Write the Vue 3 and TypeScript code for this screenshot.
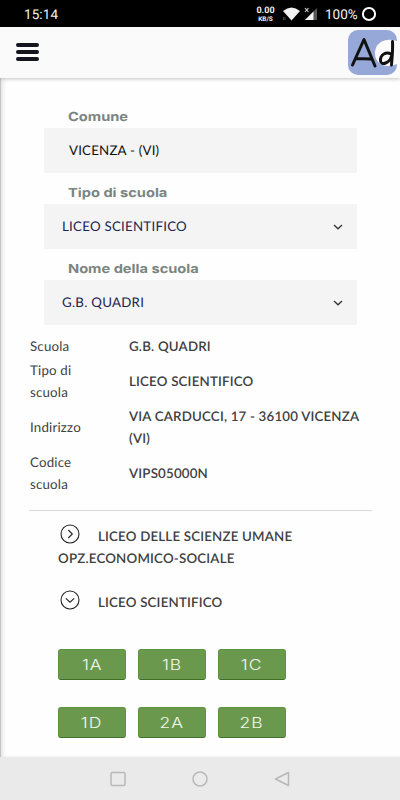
<script setup lang="ts">
interface Field {
  label: string
  value: string
  select: boolean
}

interface Detail {
  name: string
  value: string
}

const fields: Field[] = [
  { label: 'Comune', value: 'VICENZA - (VI)', select: false },
  { label: 'Tipo di scuola', value: 'LICEO SCIENTIFICO', select: true },
  { label: 'Nome della scuola', value: 'G.B. QUADRI', select: true },
]

const details: Detail[] = [
  { name: 'Scuola', value: 'G.B. QUADRI' },
  { name: 'Tipo di scuola', value: 'LICEO SCIENTIFICO' },
  { name: 'Indirizzo', value: 'VIA CARDUCCI, 17 - 36100 VICENZA (VI)' },
  { name: 'Codice scuola', value: 'VIPS05000N' },
]

const classes: string[] = ['1A', '1B', '1C', '1D', '2A', '2B']
</script>

<template>
  <div class="screen">
    <div class="status">
      <span class="clock">15:14</span>
      <div class="indicators">
        <div class="speed"><b>0.00</b><small>KB/S</small></div>
        <svg class="wifi" width="19" height="14" viewBox="0 0 19 14">
          <path d="M1 4Q9.500 -3 18 4L9.500 13.500Z" fill="#f2f2f2" />
          <path d="M1.500 10v3M3 10v3" stroke="#555" stroke-width=".8" />
        </svg>
        <svg class="signal" width="14" height="14" viewBox="0 0 14 14">
          <path d="M13 1V13H1Z" fill="#555" />
          <path d="M9.500 4.500V13H1Z" fill="#f2f2f2" />
          <path d="M1 1l3.500 4M4.500 1L1 5" stroke="#ddd" stroke-width="1.100" />
        </svg>
        <span class="percent">100%</span>
        <svg class="battery" width="16" height="16" viewBox="0 0 16 16">
          <circle cx="8" cy="8" r="6.100" fill="none" stroke="#fff" stroke-width="2" />
        </svg>
      </div>
    </div>

    <header class="bar">
      <button class="menu" aria-label="Menu"><i></i><i></i><i></i></button>
      <svg class="logo" width="49" height="45" viewBox="0 0 49 45">
        <rect width="49" height="45" rx="10" fill="#96a8d8" />
        <path d="M49 11C37 7 27 13 27 23C27 34 37 39 49 34Z" fill="#fcfcfc" />
        <g fill="none" stroke="#111" stroke-width="3" stroke-linecap="round" stroke-linejoin="round">
          <path d="M4.500 35L16 9.500L27 36M8 28.500L23 29" />
          <path d="M44.500 11.500C45 20 44 28 43.500 35M43 24C38 21 32 25 32.500 31C33 36 42 33 43.500 26" />
        </g>
      </svg>
    </header>

    <main class="content">
      <form class="form">
        <div v-for="field in fields" :key="field.label" class="field">
          <div class="label"><span>{{ field.label }}</span></div>
          <div class="box" :class="{ select: field.select }">
            <span>{{ field.value }}</span>
            <svg v-if="field.select" width="10" height="6" viewBox="0 0 10 6">
              <path d="M1 1L5 4.800L9 1" fill="none" stroke="#333" stroke-width="1.300" />
            </svg>
          </div>
        </div>
      </form>

      <dl class="details">
        <div v-for="item in details" :key="item.name" class="row">
          <dt>{{ item.name }}</dt>
          <dd>{{ item.value }}</dd>
        </div>
      </dl>

      <section class="courses">
        <div class="course">
          <svg width="20" height="20" viewBox="0 0 20 20">
            <circle cx="10" cy="10" r="9" />
            <path d="M8.300 6L12.300 10L8.300 14" />
          </svg>
          <span>LICEO DELLE SCIENZE UMANE OPZ.ECONOMICO-SOCIALE</span>
        </div>
        <div class="course">
          <svg width="20" height="20" viewBox="0 0 20 20">
            <circle cx="10" cy="10" r="9" />
            <path d="M5.800 8.300L10 12.200L14.200 8.300" />
          </svg>
          <span>LICEO SCIENTIFICO</span>
        </div>
        <div class="classes">
          <button v-for="name in classes" :key="name"><span>{{ name }}</span></button>
        </div>
      </section>
    </main>

    <nav class="nav">
      <svg width="16" height="16" viewBox="0 0 16 16"><rect x="1" y="1.500" width="14" height="13" rx="1.500" /></svg>
      <svg width="16" height="16" viewBox="0 0 16 16"><circle cx="8" cy="8" r="7" /></svg>
      <svg width="16" height="16" viewBox="0 0 16 16"><path d="M14.500 1.500V14.500L1.500 8Z" /></svg>
    </nav>
  </div>
</template>

<style>
body {
  margin: 0;
}
</style>

<style scoped>
.screen {
  width: 400px;
  height: 800px;
  display: flex;
  flex-direction: column;
  overflow: hidden;
  background: #fefefe;
  color: #404040;
  font-family: Lato, sans-serif;
  font-size: 13.3px;
  letter-spacing: 0.19px;
  text-rendering: geometricPrecision;
}
.status {
  flex: none;
  box-sizing: border-box;
  height: 27px;
  padding: 1px 23px 0 24px;
  display: flex;
  justify-content: space-between;
  align-items: center;
  background: #000;
  color: #f2f2f2;
  font-family: Roboto, sans-serif;
  letter-spacing: 0;
}
.clock {
  font-size: 13.5px;
  letter-spacing: 0.1px;
  padding-top: 1px;
}
.indicators {
  display: flex;
  align-items: center;
}
.speed {
  width: 19px;
  display: flex;
  flex-direction: column;
  align-items: center;
  margin-right: 7px;
}
.speed b {
  font-size: 9px;
  line-height: 10px;
}
.speed small {
  font-size: 6.5px;
  line-height: 7px;
  font-weight: 700;
}
.wifi {
  margin-right: 3px;
}
.signal {
  margin-right: 7px;
}
.percent {
  width: 34px;
  font-size: 13.5px;
  padding-top: 1px;
}
.battery {
  margin-left: 2px;
}
.bar {
  flex: none;
  box-sizing: border-box;
  height: 51px;
  padding: 0 3px 0 16px;
  display: flex;
  align-items: center;
  justify-content: space-between;
  background: #fafafa;
  box-shadow: 0 1px 4px rgba(0, 0, 0, 0.2);
  z-index: 1;
}
.menu {
  padding: 0;
  border: 0;
  background: none;
  display: flex;
  flex-direction: column;
  gap: 3px;
  margin-top: -1px;
}
.menu i {
  width: 23px;
  height: 4px;
  border-radius: 2px;
  background: #15151f;
}
.content {
  flex: 1;
  min-height: 0;
  box-shadow: inset 1px 0 0 #c4c4c4, inset 4px 0 5px -2px rgba(0, 0, 0, 0.15);
}
.form {
  margin: 27px 43px 0 44px;
}
.field {
  height: 76px;
}
.label {
  height: 23px;
  padding-left: 24px;
  line-height: 26px;
  color: #7a8582;
  font-family: Inter, sans-serif;
  font-size: 12.5px;
  font-weight: 700;
  letter-spacing: 0;
  white-space: nowrap;
}
.label span {
  display: inline-block;
  transform: scaleX(1.17);
  transform-origin: left;
}
.box {
  box-sizing: border-box;
  height: 45px;
  padding: 0 14px 0 25px;
  display: flex;
  align-items: center;
  justify-content: space-between;
  background: #f4f4f4;
  color: #111;
}
.box span {
  padding-bottom: 1px;
}
.box.select {
  padding-left: 18px;
  color: #1c2452;
  letter-spacing: 0.25px;
}
.details {
  margin: 1px 28px 0 29px;
  height: 176px;
  border-bottom: 1px solid #d8d8d8;
}
.row {
  display: flex;
  align-items: center;
  line-height: 22px;
  padding: 1px;
}
dt {
  flex: none;
  width: 60px;
  margin-right: 39px;
}
dd {
  margin: 0;
  font-weight: 600;
}
.courses {
  padding: 14px 58px 0;
}
.course {
  line-height: 22px;
  margin-bottom: 22px;
  font-weight: 600;
}
.course svg {
  height: 20px;
  margin: -6px 18px -4px 2px;
  vertical-align: 1px;
  fill: none;
  stroke: #222;
  stroke-width: 1.1;
}
.classes {
  display: grid;
  grid-template-columns: repeat(3, 68px);
  gap: 27px 12px;
  margin-top: 36px;
}
.classes button {
  box-sizing: border-box;
  height: 31px;
  padding: 0;
  border: 1px solid #5d9443;
  border-bottom-color: #3f7128;
  border-radius: 3px;
  background: #6a994e;
  color: #f2f7ee;
  font: 300 14px Inter, sans-serif;
  letter-spacing: 0.8px;
}
.classes span {
  display: inline-block;
  transform: scaleX(1.25);
}
.nav {
  flex: none;
  height: 43px;
  display: flex;
  align-items: center;
  justify-content: center;
  gap: 66px;
  background: #eaeaea;
}
.nav svg {
  fill: none;
  stroke: #b8b8b8;
  stroke-width: 1.5;
  stroke-linejoin: round;
}
</style>
